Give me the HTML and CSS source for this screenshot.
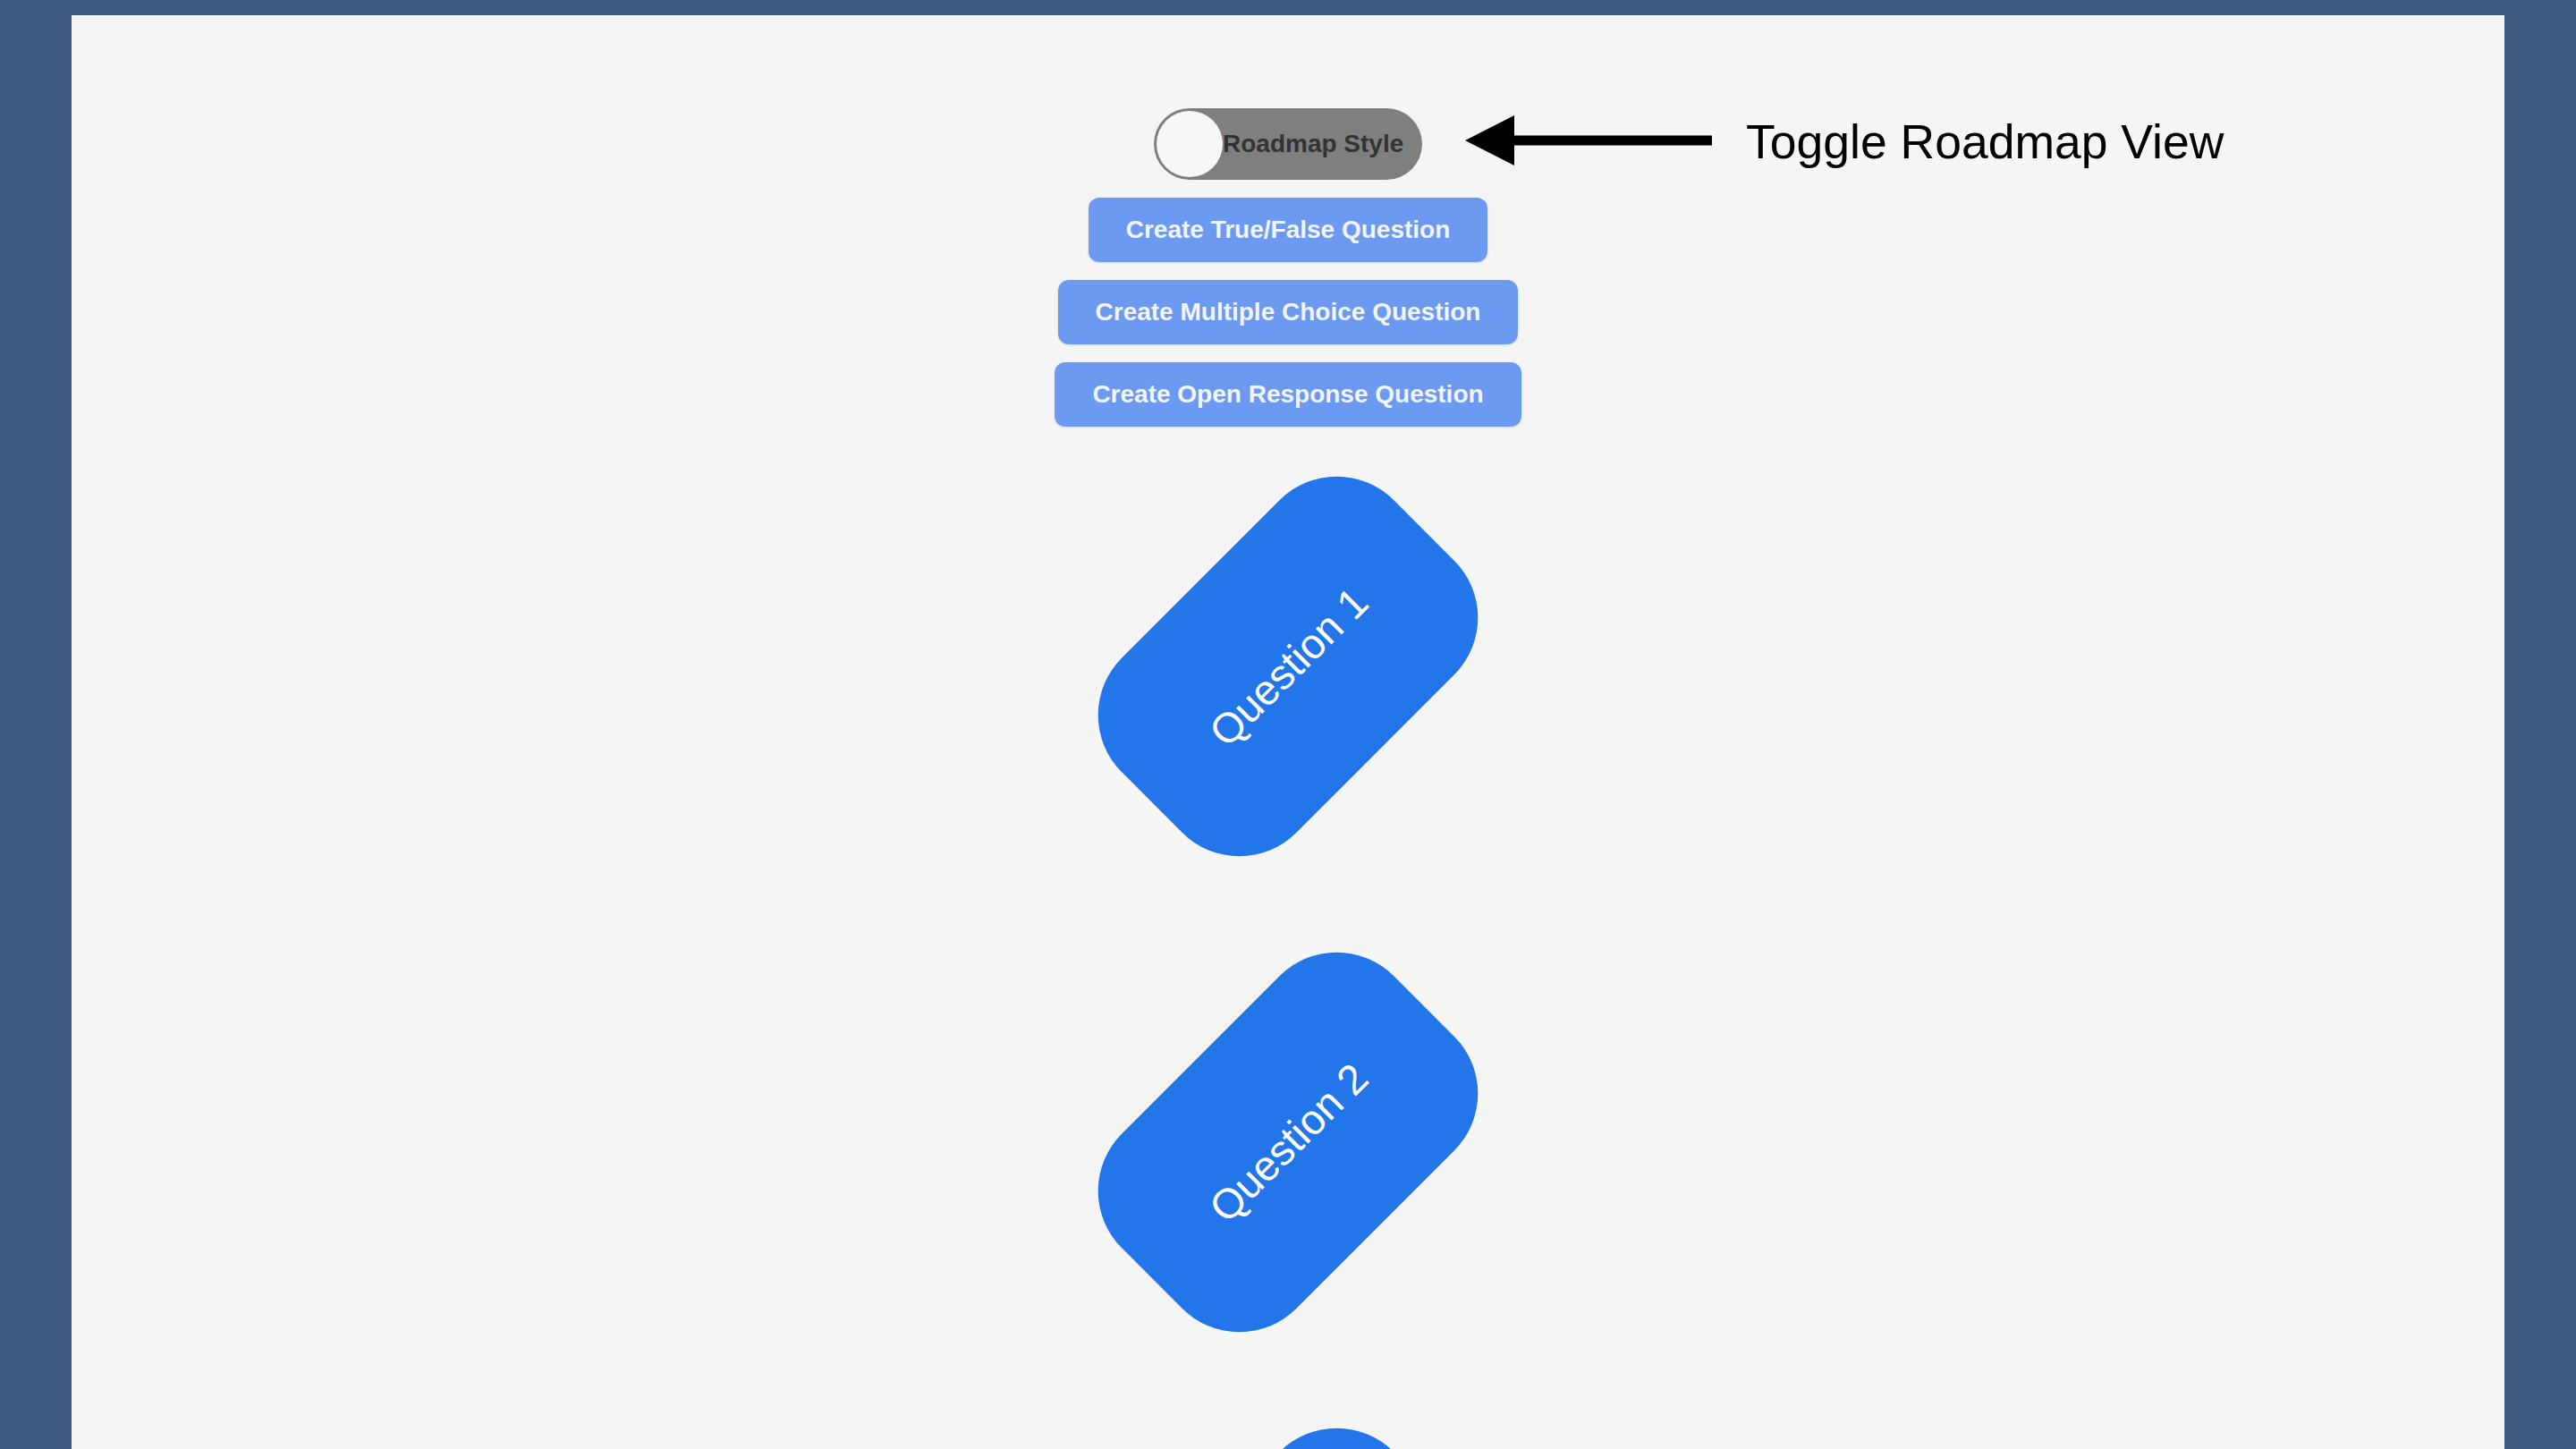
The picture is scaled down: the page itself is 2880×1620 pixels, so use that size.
FILE: index.html
```html
<!DOCTYPE html>
<html lang="en">
<head>
    <meta charset="UTF-8">
    <meta name="viewport" content="width=device-width, initial-scale=1.0">
    <title>Question Builder</title>
    <link rel="stylesheet" href="styles.css">
</head>
<body>
    <div class="frame">
        <!-- Controls -->
        <div class="controls">
            <label class="toggle">
                <input type="checkbox" id="roadmapToggle">
                <span class="toggle-knob"></span>
                <span class="toggle-label">Roadmap Style</span>
            </label>
            <button class="create-btn">Create True/False Question</button>
            <button class="create-btn">Create Multiple Choice Question</button>
            <button class="create-btn">Create Open Response Question</button>
        </div>

        <!-- Annotation -->
        <div class="callout">
            <svg class="callout-arrow" width="276" height="56" viewBox="0 0 276 56">
                <polygon points="0,28 55,0 55,56" fill="#000"/>
                <rect x="54" y="22.5" width="222" height="11" fill="#000"/>
            </svg>
            <span class="callout-text">Toggle Roadmap View</span>
        </div>

        <!-- Questions -->
        <div class="roadmap">
            <div class="question-node"><span>Question 1</span></div>
            <div class="question-node"><span>Question 2</span></div>
            <div class="question-node"><span>Question 3</span></div>
        </div>
    </div>
</body>
</html>
```

FILE: styles.css
```css
html, body {
    height: 100%;
}
body {
    margin: 0;
    padding: 17px 80px 0;
    background-color: #3d5a80;
    font-family: "Liberation Sans", Arial, sans-serif;
    overflow: hidden;
    box-sizing: border-box;
}
.frame {
    position: relative;
    min-height: 100%;
    background-color: #f5f5f5;
    padding-top: 104px;
    display: flex;
    flex-direction: column;
    align-items: center;
}
.controls {
    display: flex;
    flex-direction: column;
    align-items: center;
    gap: 20px;
}
.toggle {
    position: relative;
    display: flex;
    align-items: center;
    width: 300px;
    height: 80px;
    box-sizing: border-box;
    padding-left: 77px;
    background-color: #7f7f7f;
    border-radius: 40px;
    cursor: pointer;
}
.toggle input {
    display: none;
}
.toggle-knob {
    position: absolute;
    left: 3px;
    top: 3px;
    width: 74px;
    height: 74px;
    border-radius: 50%;
    background-color: #f7f7f7;
}
.toggle-label {
    font-size: 28px;
    font-weight: bold;
    color: #333;
}
.create-btn {
    padding: 20px 42px;
    font-family: inherit;
    font-size: 28px;
    line-height: 32px;
    font-weight: bold;
    color: #f2f5fb;
    background-color: #6d9af1;
    border: none;
    border-radius: 12px;
    box-shadow: 0 1px 3px rgba(0, 0, 0, 0.12);
    cursor: pointer;
}
.callout {
    position: absolute;
    left: 1558px;
    top: 112px;
    height: 56px;
    display: flex;
    align-items: center;
    gap: 38px;
}
.callout-arrow {
    display: block;
}
.callout-text {
    font-size: 53.5px;
    line-height: 56px;
    padding-top: 3px;
    color: #000;
    white-space: nowrap;
}
.roadmap {
    margin-top: 130px;
    display: flex;
    flex-direction: column;
    align-items: center;
    gap: 256px;
}
.question-node {
    width: 430px;
    height: 276px;
    border-radius: 90px;
    background-color: #2376ea;
    display: flex;
    align-items: center;
    justify-content: center;
    transform: rotate(-45deg);
}
.question-node span {
    font-size: 47px;
    color: #fff;
}
```
